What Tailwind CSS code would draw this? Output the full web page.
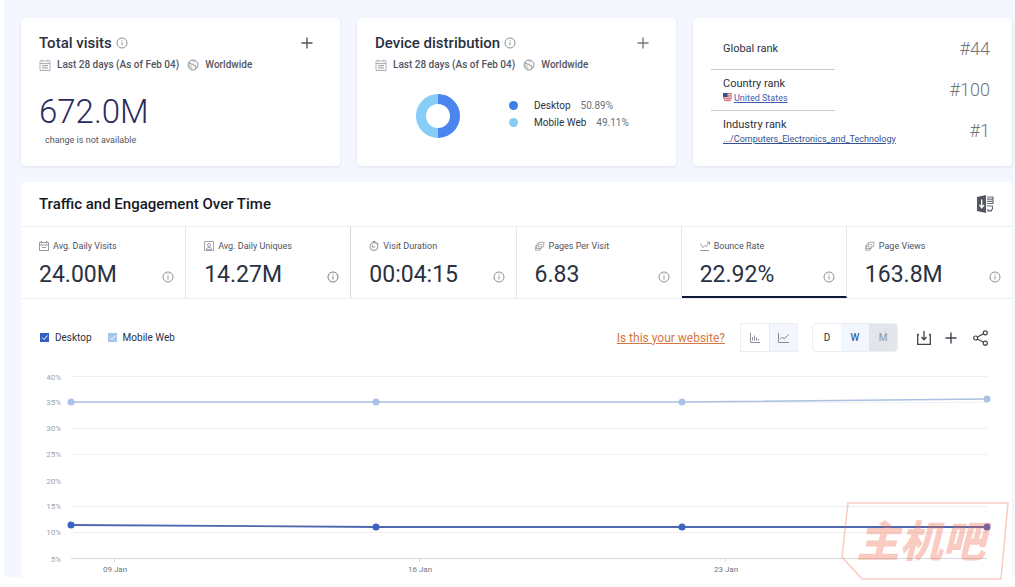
<!DOCTYPE html>
<html lang="en">
<head>
  <meta charset="UTF-8">
  <meta name="viewport" content="width=device-width, initial-scale=1.0">
  <title>Traffic Overview</title>
  <script src="https://cdn.jsdelivr.net/npm/@tailwindcss/browser@4"></script>
</head>
<body class="bg-white pb-2.5 font-['Roboto',sans-serif] text-[#2a3142]">

  <!-- Shared icons -->
  <svg class="hidden">
    <symbol id="info" viewBox="0 0 12 12" fill="none" stroke="currentColor">
      <circle cx="6" cy="6" r="5" />
      <path d="M6 5.2v3.3M6 3.2v1" />
    </symbol>
    <symbol id="plus" viewBox="0 0 12 12" fill="none" stroke="currentColor" stroke-width="1.4">
      <path d="M6 .5v11M.5 6h11" />
    </symbol>
    <symbol id="calendar" viewBox="0 0 12 12" fill="none" stroke="currentColor" stroke-width=".9">
      <path d="M1 2h10v9.5H1zM1 4.5h10M3.2 .5v2M8.8 .5v2M3 6.5h6M3 8.8h6" />
      <path d="M4 5.5v5M6 5.5v5M8 5.5v5" stroke-width=".5" />
    </symbol>
    <symbol id="globe" viewBox="0 0 12 12" fill="none" stroke="currentColor">
      <circle cx="6" cy="6" r="5" />
      <path d="M2 3.500l2.500 1.700h2l.5 1.300 2 .5-.5 2.500" />
      <path d="M1.500 4l3 2.500 1 1.500-.5 2.500-2.500-1.500zM5.500 1.300l3.500 1-1.500 1.400-1.600-.6z" fill="currentColor" stroke="none" opacity=".4" />
    </symbol>
    <symbol id="pages" viewBox="0 0 12 12" fill="none" stroke="currentColor" stroke-width=".9">
      <path d="M4.500 1.500h6.500l-1 5.500H3.700zM3.800 3.500H2.500l-.8 5.500h6l.4-2M2 5.500H1l-.5 5.500h5.500l.4-2M5.800 4.200h3" />
    </symbol>
  </svg>

  <main class="relative ml-1 bg-[#f4f7fe] pt-[18px] pr-[3px] pl-[17px]">

    <div class="grid grid-cols-3 gap-[17px]">
      <!-- Total visits -->
      <section class="h-[148px] rounded bg-white px-[18px] pt-4 shadow-[0_1px_3px_rgba(60,80,120,0.12)]">
        <div class="flex items-center">
          <h2 class="text-[15px] leading-[18px] font-medium">Total visits</h2>
          <svg class="ml-1 size-3 text-[#8b9099]"><use href="#info" /></svg>
          <button class="mr-[9px] ml-auto text-[#51565f]" aria-label="Add total visits"><svg class="size-3"><use href="#plus" /></svg></button>
        </div>
        <div class="mt-1 flex items-center text-[10px] leading-[18px] font-medium text-[#51565f]">
          <svg class="mr-1.5 size-3 text-[#a5a9af]"><use href="#calendar" /></svg>
          Last 28 days (As of Feb 04)
          <svg class="mr-1.5 ml-2 size-3 text-[#8b9099]"><use href="#globe" /></svg>
          Worldwide
        </div>
        <p class="mt-[18px] text-[33px] leading-10 font-light text-[#2b2c5c]">672.0M</p>
        <p class="ml-1.5 text-[9px] leading-4 text-[#51565f]">change is not available</p>
      </section>

      <!-- Device distribution -->
      <section class="h-[148px] rounded bg-white px-[18px] pt-4 shadow-[0_1px_3px_rgba(60,80,120,0.12)]">
        <div class="flex items-center">
          <h2 class="text-[15px] leading-[18px] font-medium">Device distribution</h2>
          <svg class="ml-1 size-3 text-[#8b9099]"><use href="#info" /></svg>
          <button class="mr-[9px] ml-auto text-[#777b83]" aria-label="Add device distribution"><svg class="size-3"><use href="#plus" /></svg></button>
        </div>
        <div class="mt-1 flex items-center text-[10px] leading-[18px] font-medium text-[#51565f]">
          <svg class="mr-1.5 size-3 text-[#a5a9af]"><use href="#calendar" /></svg>
          Last 28 days (As of Feb 04)
          <svg class="mr-1.5 ml-2 size-3 text-[#8b9099]"><use href="#globe" /></svg>
          Worldwide
        </div>
        <div class="mt-[19px] ml-10 flex items-start">
          <svg class="size-[46px]" viewBox="0 0 46 46" fill="none" stroke-width="10">
            <path d="M23 6a17 17 0 0 0 0 34" stroke="#86cdf8" />
            <path d="M23 6a17 17 0 0 1 0 34" stroke="#4a86ee" />
          </svg>
          <ul class="mt-1 ml-12 text-[10px] leading-[17px]">
            <li class="flex items-center"><span class="mr-4 size-[9px] rounded-full bg-[#3f7fea]"></span>Desktop<span class="ml-2.5 text-[#6b7079]">50.89%</span></li>
            <li class="flex items-center"><span class="mr-4 size-[9px] rounded-full bg-[#86cdf4]"></span>Mobile Web<span class="ml-2.5 text-[#6b7079]">49.11%</span></li>
          </ul>
        </div>
      </section>

      <!-- Ranks -->
      <section class="h-[148px] rounded bg-white pt-[11px] pr-[22px] pl-[18px] text-[11px] leading-4 shadow-[0_1px_3px_rgba(60,80,120,0.12)]">
        <div class="flex h-10 items-center pl-3">
          <h3>Global rank</h3>
          <span class="ml-auto text-lg font-light text-[#70747b]">#44</span>
        </div>
        <hr class="w-[124px] border-[#c9cbcf]">
        <div class="flex h-10 items-center pl-3">
          <div>
            <h3 class="leading-[15px]">Country rank</h3>
            <p class="flex items-center text-[9px] leading-[14px]">
              <svg class="mr-0.5 size-[9px]" viewBox="0 0 9 9">
                <path d="M0 0h9v4.500a4.500 4.500 0 0 1-9 0z" fill="#f3dfe2" />
                <path d="M0 .8h9M0 3h9M0 5.200h9M1 7.200h7" stroke="#cf5261" />
                <path d="M0 0h4.500v4H0z" fill="#3e4a86" />
              </svg>
              <a href="#" class="text-[#3f5fae] underline">United States</a>
            </p>
          </div>
          <span class="ml-auto text-lg font-light text-[#70747b]">#100</span>
        </div>
        <hr class="w-[124px] border-[#c9cbcf]">
        <div class="flex h-10 items-center pl-3">
          <div>
            <h3 class="leading-[15px]">Industry rank</h3>
            <p class="text-[9px] leading-[14px]"><a href="#" class="text-[#34508f] underline">.../Computers_Electronics_and_Technology</a></p>
          </div>
          <span class="ml-auto text-lg font-light text-[#70747b]">#1</span>
        </div>
      </section>
    </div>

    <!-- Traffic and engagement -->
    <section class="mt-4 rounded-t bg-white">
      <header class="flex h-11 items-center justify-between px-[18px]">
        <h2 class="text-[15px] font-medium text-[#15181f]">Traffic and Engagement Over Time</h2>
        <button aria-label="Export to Excel">
          <svg class="h-[18px] w-[17px]" viewBox="0 0 17 18" fill="none">
            <path d="M0 2l9-2v18l-9-2z" fill="#51565f" />
            <path d="M4.700 4.500v8M2.500 10l2.200 2.700L7 10" stroke="#fff" stroke-width="1.300" />
            <path d="M10 2h6v6.500h-6M10 4.200h6M10 6.300h6M10 8.500h6M10 11h5.500v3l-1.500 1.500h-2.500l-1-1.500M10 16h5" stroke="#6a6f77" stroke-width="1.200" />
          </svg>
        </button>
      </header>

      <div class="grid grid-cols-6 border-y border-[#eceef1]">
        <div class="h-[71px] border-r border-[#e6e8eb] px-[18px] pt-3">
          <div class="flex items-center gap-1 text-[9px] leading-[14px] text-[#4e535d]">
            <svg class="size-2.5 text-[#8b9099]" viewBox="0 0 10 10" fill="none" stroke="currentColor" stroke-width=".9"><path d="M.5 1.500h9v8h-9zM.5 4h9M2.500 0v2.500M7.500 0v2.500M3 6.500h4" /></svg>
            Avg. Daily Visits
          </div>
          <div class="mt-2 flex items-center justify-between">
            <span class="text-[23px] leading-7">24.00M</span>
            <svg class="-mr-[7px] mt-1 size-3 text-[#8b9099]"><use href="#info" /></svg>
          </div>
        </div>
        <div class="h-[71px] border-r border-[#d6d9dd] px-[18px] pt-3">
          <div class="flex items-center gap-1 text-[9px] leading-[14px] text-[#4e535d]">
            <svg class="size-2.5 text-[#8b9099]" viewBox="0 0 10 10" fill="none" stroke="currentColor" stroke-width=".8"><path d="M.5 .5h9v9h-9zM2.500 8.500V7.500l1.500-1h2l1.500 1v1z" /><circle cx="5" cy="4" r="1.500" /></svg>
            Avg. Daily Uniques
          </div>
          <div class="mt-2 flex items-center justify-between">
            <span class="text-[23px] leading-7">14.27M</span>
            <svg class="-mr-[7px] mt-1 size-3 text-[#777b83]"><use href="#info" /></svg>
          </div>
        </div>
        <div class="h-[71px] border-r border-[#e6e8eb] px-[18px] pt-3">
          <div class="flex items-center gap-1 text-[9px] leading-[14px] text-[#4e535d]">
            <svg class="size-2.5 text-[#7b8089]" viewBox="0 0 10 10" fill="none" stroke="currentColor" stroke-width=".9"><circle cx="5" cy="5.500" r="4" /><path d="M3.500 .5h3M8 1.500l1.500 1.500M3.500 4v2H6" /></svg>
            Visit Duration
          </div>
          <div class="mt-2 flex items-center justify-between">
            <span class="text-[23px] leading-7">00:04:15</span>
            <svg class="-mr-[7px] mt-1 size-3 text-[#8b9099]"><use href="#info" /></svg>
          </div>
        </div>
        <div class="h-[71px] border-r border-[#e6e8eb] px-[18px] pt-3">
          <div class="flex items-center gap-1 text-[9px] leading-[14px] text-[#4e535d]">
            <svg class="size-2.5 text-[#8b9099]"><use href="#pages" /></svg>
            Pages Per Visit
          </div>
          <div class="mt-2 flex items-center justify-between">
            <span class="text-[23px] leading-7">6.83</span>
            <svg class="-mr-[7px] mt-1 size-3 text-[#8b9099]"><use href="#info" /></svg>
          </div>
        </div>
        <div class="h-[71px] border-r border-b-2 border-r-[#e6e8eb] border-b-[#0c1836] px-[18px] pt-3">
          <div class="flex items-center gap-1 text-[9px] leading-[14px] text-[#4e535d]">
            <svg class="size-2.5 text-[#8b9099]" viewBox="0 0 10 10" fill="none" stroke="currentColor" stroke-width=".9"><path d="M0 2.500l3 4 2-2 1 1L9.500 1M7 1h2.500v2.500M0 9.500h9" /></svg>
            Bounce Rate
          </div>
          <div class="mt-2 flex items-center justify-between">
            <span class="text-[23px] leading-7">22.92%</span>
            <svg class="-mr-[7px] mt-1 size-3 text-[#8b9099]"><use href="#info" /></svg>
          </div>
        </div>
        <div class="h-[71px] px-[18px] pt-3">
          <div class="flex items-center gap-1 text-[9px] leading-[14px] text-[#4e535d]">
            <svg class="size-2.5 text-[#8b9099]"><use href="#pages" /></svg>
            Page Views
          </div>
          <div class="mt-2 flex items-center justify-between">
            <span class="text-[23px] leading-7">163.8M</span>
            <svg class="-mr-[7px] mt-1 size-3 text-[#8b9099]"><use href="#info" /></svg>
          </div>
        </div>
      </div>

      <!-- Legend and chart controls -->
      <div class="flex items-center pt-6 pr-6 pl-[19px] text-[10px]">
        <label class="flex items-center">
          <span class="grid size-[9px]">
            <input type="checkbox" checked class="col-start-1 row-start-1 size-[9px] appearance-none bg-[#2f5fc0]">
            <svg class="pointer-events-none col-start-1 row-start-1 size-[9px]" viewBox="0 0 9 9" fill="none" stroke="#fff"><path d="M2 4.500l2 2 3.500-4" /></svg>
          </span>
          <span class="ml-1.5">Desktop</span>
        </label>
        <label class="ml-4 flex items-center">
          <span class="grid size-[9px]">
            <input type="checkbox" checked class="col-start-1 row-start-1 size-[9px] appearance-none bg-[#a9c4ec]">
            <svg class="pointer-events-none col-start-1 row-start-1 size-[9px]" viewBox="0 0 9 9" fill="none" stroke="#fff"><path d="M2 4.500l2 2 3.500-4" /></svg>
          </span>
          <span class="ml-1.5">Mobile Web</span>
        </label>

        <a href="#" class="ml-auto text-xs text-[#d67843] underline">Is this your website?</a>

        <div class="ml-[15px] flex h-[29px] border border-[#eceef1] text-[#8b9099]">
          <button class="grid w-7 place-items-center" aria-label="Bar chart">
            <svg class="size-2.5" viewBox="0 0 10 10" fill="none" stroke="currentColor"><path d="M.5 0v9.500H10M2.500 7.500V4M4.500 7.500V2.500M6.500 7.500V4.500M8.500 7.500V6" /></svg>
          </button>
          <button class="grid w-7 place-items-center border-l border-[#e3e9f2] bg-[#f3f7fd]" aria-label="Line chart">
            <svg class="h-2.5 w-[11px]" viewBox="0 0 11 10" fill="none" stroke="currentColor"><path d="M.5 0v9.500H11M2 6.500L4.500 4l1.500 2L10.500 1.500" /></svg>
          </button>
        </div>

        <div class="ml-3.5 flex h-[29px] overflow-hidden rounded-sm border border-[#eceef1]">
          <button class="w-7">D</button>
          <button class="w-7 bg-[#f2f7fe] font-medium text-[#3f5f9f]">W</button>
          <button class="w-7 bg-[#e2e5ea] text-[#8f959e]">M</button>
        </div>

        <div class="ml-[19px] flex items-center text-[#3f444d]">
          <button aria-label="Download">
            <svg class="size-3.5" viewBox="0 0 14 14" fill="none" stroke="currentColor" stroke-width="1.300"><path d="M2 3.500H.7v9.800h12.600V3.500H12M7 0v8.500M4.500 6L7 8.700 9.500 6" /></svg>
          </button>
          <button class="ml-3.5" aria-label="Add chart"><svg class="size-3"><use href="#plus" /></svg></button>
          <button class="ml-4" aria-label="Share">
            <svg class="h-4 w-[15px]" viewBox="0 0 15 16" fill="none" stroke="currentColor" stroke-width="1.200"><circle cx="2.600" cy="8" r="2" /><circle cx="12.300" cy="2.800" r="2" /><circle cx="12.300" cy="13.200" r="2" /><path d="M4.400 7l6.100-3.300M4.400 9l6.100 3.300" /></svg>
          </button>
        </div>
      </div>

      <!-- Bounce rate chart -->
      <svg class="mt-2 block w-full" viewBox="0 0 991 217" role="img" aria-label="Bounce rate by device">
        <g stroke="#eff0f2">
          <path d="M50 16.500H966M50 42.500H966M50 68.500H966M50 94.500H966M50 146.500H966M50 172.500H966" />
          <path d="M50 198.500H966M93.500 198v4M398.500 198v4M704.500 198v4" stroke="#d5d7da" />
        </g>
        <g class="text-[8px]" fill="#a0a4aa" text-anchor="end">
          <text x="40" y="20">40%</text>
          <text x="40" y="45">35%</text>
          <text x="40" y="71">30%</text>
          <text x="40" y="97">25%</text>
          <text x="40" y="124">20%</text>
          <text x="40" y="149">15%</text>
          <text x="40" y="175">10%</text>
          <text x="40" y="202">5%</text>
        </g>
        <g class="text-[8px]" fill="#70757d" text-anchor="middle">
          <text x="94" y="212">09 Jan</text>
          <text x="399" y="212">16 Jan</text>
          <text x="705" y="212">23 Jan</text>
        </g>
        <g fill="#abc3ea">
          <path d="M50 42L355 42 661 42 966 39" fill="none" stroke="#abc0e2" stroke-width="1.500" />
          <circle cx="50" cy="42" r="3.500" /><circle cx="355" cy="42" r="3.500" /><circle cx="661" cy="42" r="3.500" /><circle cx="966" cy="39" r="3.500" />
        </g>
        <g fill="#3c62c4">
          <path d="M50 165L355 167H966" fill="none" stroke="#4d68ac" stroke-width="1.800" />
          <circle cx="50" cy="165" r="3.500" /><circle cx="355" cy="167" r="3.500" /><circle cx="661" cy="167" r="3.500" /><circle cx="966" cy="167" r="3.500" />
        </g>
      </svg>
    </section>

    <!-- Watermark -->
    <div class="pointer-events-none absolute right-1.5 -bottom-[3px] grid h-[78px] w-[168px] place-items-center text-[#ee6a4c]/35">
      <svg class="col-start-1 row-start-1" viewBox="0 0 168 78" fill="none" stroke="currentColor" stroke-width="1.500"><path d="M7 1h160l-7 76H21L1 55z" /></svg>
      <span class="col-start-1 row-start-1 pr-2 pb-1.5 font-['Noto_Sans_CJK_SC',sans-serif] text-[43px] leading-none font-black italic" lang="zh-CN">主机吧</span>
    </div>
  </main>
</body>
</html>
